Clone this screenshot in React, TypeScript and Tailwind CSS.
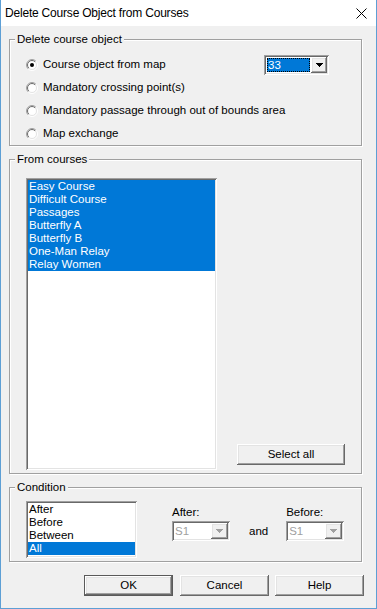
import React from "react";

const RAISED =
  "shadow-[inset_-1px_-1px_0_#696969,inset_1px_1px_0_#ffffff,inset_-2px_-2px_0_#a0a0a0,inset_2px_2px_0_#e3e3e3]";
const SUNKEN =
  "shadow-[inset_1px_1px_0_#a0a0a0,inset_-1px_-1px_0_#ffffff,inset_2px_2px_0_#696969,inset_-2px_-2px_0_#e3e3e3]";

function Arrow({ color }: { color: string }) {
  return (
    <svg width="7" height="4" viewBox="0 0 7 4" fill={color} shapeRendering="crispEdges">
      <rect x="0" y="0" width="7" height="1" />
      <rect x="1" y="1" width="5" height="1" />
      <rect x="2" y="2" width="3" height="1" />
      <rect x="3" y="3" width="1" height="1" />
    </svg>
  );
}

function Radio({ checked, label }: { checked?: boolean; label: string }) {
  return (
    <div className="flex items-center gap-[5px]">
      <svg width="12" height="12" viewBox="0 0 12 12">
        <defs>
          <linearGradient id="ro" x1="0" y1="0" x2="1" y2="1">
            <stop offset="0.45" stopColor="#a0a0a0" />
            <stop offset="0.55" stopColor="#ffffff" />
          </linearGradient>
          <linearGradient id="ri" x1="0" y1="0" x2="1" y2="1">
            <stop offset="0.45" stopColor="#696969" />
            <stop offset="0.55" stopColor="#e3e3e3" />
          </linearGradient>
        </defs>
        <circle cx="6" cy="6" r="5.5" fill="none" stroke="url(#ro)" strokeWidth="1" />
        <circle cx="6" cy="6" r="4.5" fill="#ffffff" stroke="url(#ri)" strokeWidth="1" />
        {checked && <circle cx="6" cy="6" r="2" fill="#000000" />}
      </svg>
      <span className="whitespace-nowrap">{label}</span>
    </div>
  );
}

function Group({
  label,
  className,
  children,
}: {
  label: string;
  className?: string;
  children: React.ReactNode;
}) {
  return (
    <fieldset
      className={`w-[353px] border border-[#a0a0a0] shadow-[inset_1px_1px_0_#ffffff,1px_1px_0_#ffffff] ${className ?? ""}`}
    >
      <legend className="ml-[5px] px-[2px] bg-[#f0f0f0] leading-[13px]">{label}</legend>
      {children}
    </fieldset>
  );
}

function Button({ label, def, className }: { label: string; def?: boolean; className?: string }) {
  if (def) {
    return (
      <div className={`h-[21px] border border-[#5a5a5a] ${className ?? ""}`}>
        <div className={`h-full w-full flex items-center justify-center bg-[#f0f0f0] ${RAISED}`}>
          {label}
        </div>
      </div>
    );
  }
  return (
    <div className={`h-[21px] flex items-center justify-center bg-[#f0f0f0] ${RAISED} ${className ?? ""}`}>
      {label}
    </div>
  );
}

function DisabledCombo() {
  return (
    <div className={`w-[58px] h-[20px] p-[2px] flex bg-white ${SUNKEN}`}>
      <div className="flex-1 flex items-center pl-[1px] text-[#a0a0a0]">S1</div>
      <div className={`w-[17px] h-full flex items-center justify-center bg-[#f0f0f0] ${RAISED}`}>
        <Arrow color="#a0a0a0" />
      </div>
    </div>
  );
}

const courses = [
  "Easy Course",
  "Difficult Course",
  "Passages",
  "Butterfly A",
  "Butterfly B",
  "One-Man Relay",
  "Relay Women",
];

const conditions = ["After", "Before", "Between", "All"];

export default function App() {
  return (
    <div className="w-[377px] h-[609px] flex flex-col border-x border-b border-[#5d9fd5] bg-[#f0f0f0] font-['Liberation_Sans',Arial,sans-serif] text-[11.5px] leading-[13px] text-black overflow-hidden">
      <div className="h-[26px] shrink-0 bg-white flex items-center justify-between pl-[4px] pr-[9px]">
        <span className="text-[12px] tracking-[-0.2px]">Delete Course Object from Courses</span>
        <svg width="11" height="11" viewBox="0 0 11 11">
          <path d="M0.5 0.5L10.5 10.5M10.5 0.5L0.5 10.5" stroke="#000000" strokeWidth="1" />
        </svg>
      </div>

      <div className="flex-1 flex flex-col pl-[8px] pt-[7px]">
        <Group label="Delete course object">
          <div className="flex flex-col pt-[7px] pl-[16px] pr-[32px]">
            <div className="h-[23px] flex items-center justify-between">
              <Radio checked label="Course object from map" />
              <div className={`w-[65px] h-[20px] p-[2px] flex bg-white ${SUNKEN}`}>
                <div className="flex-1 m-[1px] bg-[#0078d7] border border-dotted border-black text-white flex items-center pl-[0px] leading-[12px]">
                  33
                </div>
                <div className={`w-[16px] h-full flex items-center justify-center bg-[#f0f0f0] ${RAISED}`}>
                  <Arrow color="#000000" />
                </div>
              </div>
            </div>
            <div className="h-[23px] flex items-center">
              <Radio label="Mandatory crossing point(s)" />
            </div>
            <div className="h-[23px] flex items-center">
              <Radio label="Mandatory passage through out of bounds area" />
            </div>
            <div className="h-[23px] flex items-center">
              <Radio label="Map exchange" />
            </div>
          </div>
        </Group>

        <Group label="From courses" className="mt-[7px]">
          <div className="flex pt-[12px] pl-[16px] pb-[3px]">
            <div className={`w-[191px] h-[292px] p-[2px] bg-white ${SUNKEN}`}>
              {courses.map((c) => (
                <div key={c} className="h-[13px] pl-[1px] bg-[#0078d7] text-white whitespace-nowrap">
                  {c}
                </div>
              ))}
            </div>
            <Button label="Select all" className="w-[108px] h-[20px] ml-[20px] self-end mb-[5px]" />
          </div>
        </Group>

        <Group label="Condition" className="mt-[7px]">
          <div className="flex pt-[7px] pl-[16px] pb-[3px]">
            <div className={`w-[111px] h-[57px] p-[2px] bg-white ${SUNKEN}`}>
              {conditions.map((c) => (
                <div
                  key={c}
                  className={`h-[13px] pl-[1px] whitespace-nowrap ${c === "All" ? "bg-[#0078d7] text-white" : ""}`}
                >
                  {c}
                </div>
              ))}
            </div>
            <div className="ml-[35px] flex items-start">
              <div className="flex flex-col mt-[5px]">
                <div className="h-[13px]">After:</div>
                <div className="mt-[2px]">
                  <DisabledCombo />
                </div>
              </div>
              <div className="ml-[19px] mt-[20px] h-[20px] flex items-center">and</div>
              <div className="ml-[18px] flex flex-col mt-[5px]">
                <div className="h-[13px]">Before:</div>
                <div className="mt-[2px]">
                  <DisabledCombo />
                </div>
              </div>
            </div>
          </div>
        </Group>

        <div className="flex mt-[13px] pl-[75px]">
          <Button label="OK" def className="w-[89px]" />
          <Button label="Cancel" className="w-[89px] ml-[7px]" />
          <Button label="Help" className="w-[89px] ml-[6px]" />
        </div>
      </div>
    </div>
  );
}
